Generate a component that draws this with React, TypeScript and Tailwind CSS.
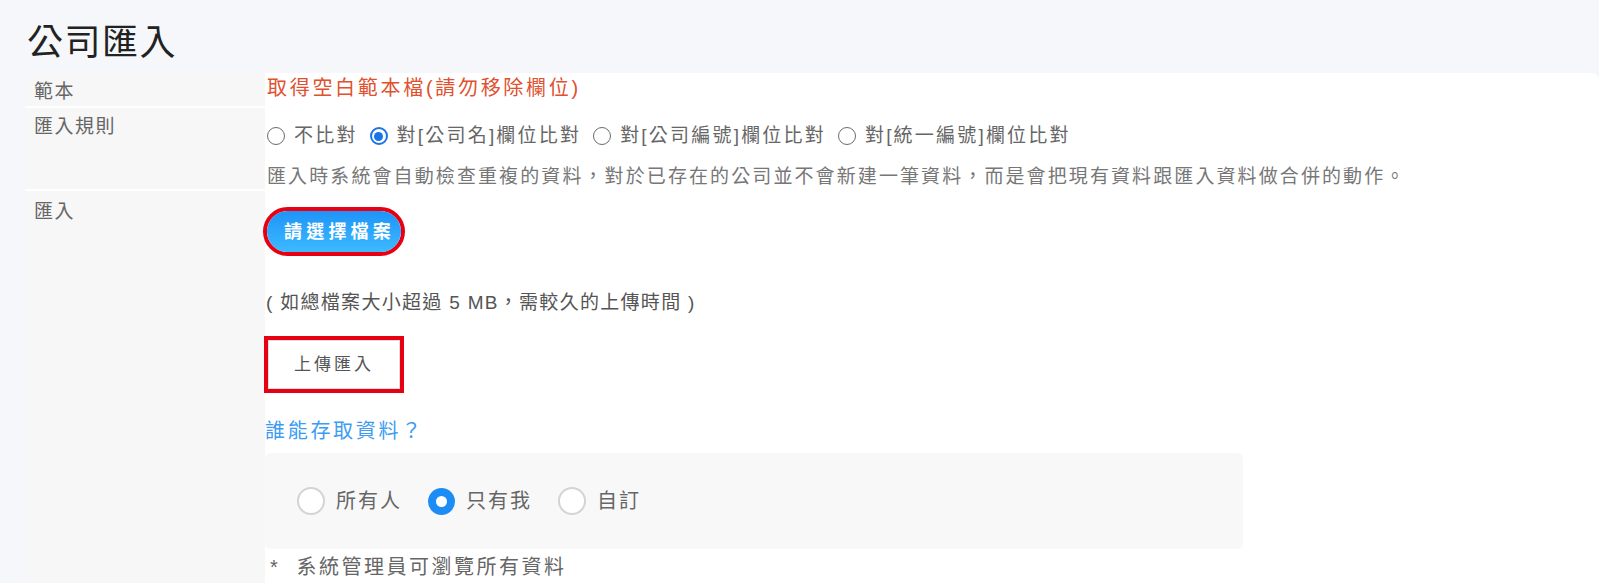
import React from "react";

const rules = ["不比對", "對[公司名]欄位比對", "對[公司編號]欄位比對", "對[統一編號]欄位比對"];
const access = ["所有人", "只有我", "自訂"];

function SmallRadio({ checked }: { checked: boolean }) {
  return checked ? (
    <span className="flex h-[18px] w-[18px] shrink-0 items-center justify-center rounded-full border-2 border-[#1a73e8] bg-white">
      <span className="h-[9px] w-[9px] rounded-full bg-[#1a73e8]" />
    </span>
  ) : (
    <span className="h-[18px] w-[18px] shrink-0 rounded-full border border-[#6b6b6b] bg-white" />
  );
}

function BigRadio({ checked }: { checked: boolean }) {
  return checked ? (
    <span className="flex h-[27px] w-[27px] shrink-0 items-center justify-center rounded-full bg-[#1e8cf5]">
      <span className="h-[11px] w-[11px] rounded-full bg-white" />
    </span>
  ) : (
    <span className="h-[28px] w-[28px] shrink-0 rounded-full border-2 border-[#d4d4d4] bg-white" />
  );
}

export default function App() {
  return (
    <div className="min-h-screen bg-[#f5f7fa] font-['Liberation_Sans','Noto_Sans_CJK_TC',sans-serif] text-[#666]">
      <h1 className="pl-[27px] pt-[21px] text-[36px] leading-[43px] tracking-[1.5px] text-[#222]">公司匯入</h1>

      {/* form panel */}
      <div className="ml-[25px] mt-[9px] overflow-hidden rounded-tr-lg bg-white">
        {/* 範本 */}
        <div className="grid grid-cols-[240px_1fr]">
          <div className="border-b-2 border-white bg-[#f7f7f7] pl-[9px] pt-[7px] text-[19px] leading-[24px] tracking-[1.5px]">範本</div>
          <div className="pb-[6px] pl-[2px] pt-[3px]">
            <span className="text-[20px] leading-[24px] tracking-[2.7px] text-[#e0512f]">取得空白範本檔(請勿移除欄位)</span>
          </div>
        </div>

        {/* 匯入規則 */}
        <div className="grid grid-cols-[240px_1fr]">
          <div className="border-b-2 border-white bg-[#f7f7f7] pl-[9px] pt-[7px] text-[19px] leading-[24px] tracking-[1.5px]">匯入規則</div>
          <div className="pb-[2px] pt-[16px] text-[19px] leading-[24px] tracking-[2.2px]">
            <div className="flex items-center">
              {rules.map((r, i) => (
                <label key={r} className={`flex items-center ${i === 0 ? "ml-[2px]" : "ml-[12px]"}`}>
                  <SmallRadio checked={i === 1} />
                  <span className="ml-[9px]">{r}</span>
                </label>
              ))}
            </div>
            <p className="mt-[17px] pl-[2px] tracking-[2.1px] text-[#777]">
              匯入時系統會自動檢查重複的資料，對於已存在的公司並不會新建一筆資料，而是會把現有資料跟匯入資料做合併的動作。
            </p>
          </div>
        </div>

        {/* 匯入 */}
        <div className="grid grid-cols-[240px_1fr]">
          <div className="bg-[#f7f7f7] pl-[9px] pt-[9px] text-[19px] leading-[24px] tracking-[1.5px]">匯入</div>
          <div className="pb-[20px] pt-[16px] text-[19px] leading-[24px]">
            <div className="-ml-[2px] inline-flex rounded-full border-[4px] border-[#e60012]">
              <button className="h-[41px] rounded-full bg-gradient-to-b from-[#1f93f8] to-[#3dbaff] pl-[17px] pr-[6px] text-[18px] font-bold tracking-[4.2px] text-white">
                請選擇檔案
              </button>
            </div>

            <p className="mt-[35px] pl-[1px] tracking-[1.3px] text-[#555]">( 如總檔案大小超過 5 MB，需較久的上傳時間 )</p>

            <div className="-ml-[1px] mt-[21px] flex h-[57px] w-[140px] border-[4px] border-[#e60012]">
              <button className="flex-1 border border-[#dcdee2] bg-white text-[17px] tracking-[3px] text-[#555]">上傳匯入</button>
            </div>

            <p className="mt-[26px] text-[20px] tracking-[2.7px] text-[#3d9cf2]">誰能存取資料？</p>

            <div className="mt-[10px] flex h-[96px] w-[978px] items-center rounded-md bg-[#f8f8f8] pl-[32px] text-[20px] tracking-[2px]">
              {access.map((a, i) => (
                <label key={a} className={`flex items-center ${i === 0 ? "" : "ml-[26px]"}`}>
                  <BigRadio checked={i === 1} />
                  <span className="ml-[11px]">{a}</span>
                </label>
              ))}
            </div>

            <p className="mt-[6px] pl-[5px] text-[20px] tracking-[2.5px]">
              *&nbsp;&nbsp;系統管理員可瀏覽所有資料
            </p>
          </div>
        </div>
      </div>
    </div>
  );
}
